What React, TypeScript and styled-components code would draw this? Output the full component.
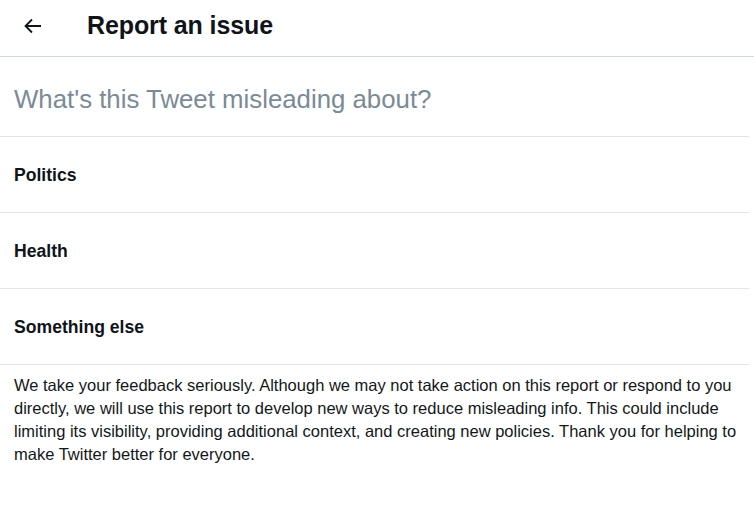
import React from "react";
import styled, { createGlobalStyle } from "styled-components";

const Global = createGlobalStyle`
  html, body { margin: 0; padding: 0; background: #ffffff; }
  body { font-family: "Liberation Sans", Arial, sans-serif; color: #0f1419; }
`;

const Page = styled.div`
  width: 754px;
  height: 510px;
  display: flex;
  flex-direction: column;
  background: #fff;
  overflow: hidden;
`;

const Header = styled.header`
  height: 57px;
  display: flex;
  align-items: center;
  border-bottom: 1px solid #cfd9de;
  box-sizing: border-box;
  padding: 0 0 5px 23px;
`;

const BackButton = styled.button`
  border: 0;
  background: none;
  padding: 0;
  width: 20px;
  height: 20px;
  display: flex;
  align-items: center;
  justify-content: center;
  color: #0f1419;
  margin-right: 44px;
`;

const Title = styled.h1`
  margin: 0;
  font-size: 25px;
  font-weight: 700;
  letter-spacing: -0.1px;
  color: #0f1419;
`;

const Body = styled.div`
  width: 749px;
  display: flex;
  flex-direction: column;
`;

const Question = styled.h2`
  margin: 0;
  height: 80px;
  display: flex;
  align-items: center;
  padding: 6px 0 0 14px;
  font-size: 25.8px;
  font-weight: 400;
  color: #7b8a97;
  border-bottom: 1px solid #dfe6ea;
  box-sizing: border-box;
`;

const Option = styled.div`
  height: 76px;
  display: flex;
  align-items: center;
  padding: 2px 0 0 14px;
  font-size: 17.6px;
  font-weight: 700;
  color: #0f1419;
  border-bottom: 1px solid #e1e8ed;
  box-sizing: border-box;
`;

const Notice = styled.p`
  margin: 0;
  padding: 9px 2px 0 14px;
  font-size: 16.5px;
  line-height: 23px;
  color: #14171a;
`;

const options = ["Politics", "Health", "Something else"];

export default function App() {
  return (
    <Page>
      <Global />
      <Header>
        <BackButton aria-label="Back">
          <svg width="18" height="16" viewBox="0 0 18 16" fill="none">
            <path d="M17 8H2M8 1.5L1.5 8L8 14.5" stroke="#0f1419" strokeWidth="1.8" />
          </svg>
        </BackButton>
        <Title>Report an issue</Title>
      </Header>
      <Body>
        <Question>What's this Tweet misleading about?</Question>
        {options.map((o) => (
          <Option key={o}>{o}</Option>
        ))}
        <Notice>
          We take your feedback seriously. Although we may not take action on this report or respond to you
          directly, we will use this report to develop new ways to reduce misleading info. This could include
          limiting its visibility, providing additional context, and creating new policies. Thank you for helping to
          make Twitter better for everyone.
        </Notice>
      </Body>
    </Page>
  );
}
